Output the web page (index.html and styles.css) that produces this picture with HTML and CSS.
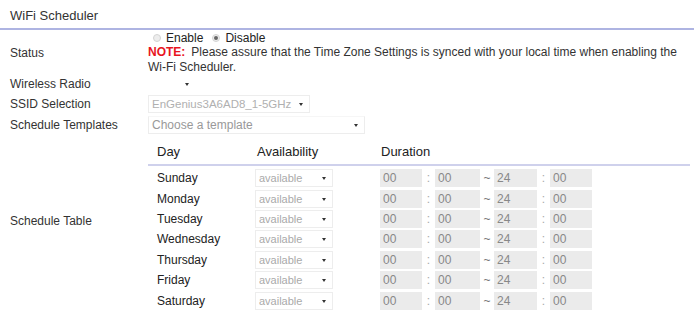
FILE: index.html
```html
<!DOCTYPE html>
<html>
<head>
<meta charset="utf-8">
<link rel="stylesheet" href="styles.css">
</head>
<body>
<div class="page">
  <div class="title">WiFi Scheduler</div>
  <div class="form">
    <div class="row row-status">
      <div class="label">Status</div>
      <div class="value">
        <div class="radios">
          <span class="radio"></span><span class="rlabel">Enable</span>
          <span class="radio checked"></span><span class="rlabel">Disable</span>
        </div>
        <div class="note-line"><b class="note-tag">NOTE:</b><span class="note-text">Please assure that the Time Zone Settings is synced with your local time when enabling the</span></div>
        <div class="note-line">Wi-Fi Scheduler.</div>
      </div>
    </div>
    <div class="row row-radio">
      <div class="label">Wireless Radio</div>
      <div class="value"><div class="select sel-empty"><span class="arrow"></span></div></div>
    </div>
    <div class="row row-ssid">
      <div class="label">SSID Selection</div>
      <div class="value"><div class="select sel-ssid"><span class="stext">EnGenius3A6AD8_1-5GHz</span><span class="arrow"></span></div></div>
    </div>
    <div class="row row-tpl">
      <div class="label">Schedule Templates</div>
      <div class="value"><div class="select sel-tpl"><span class="stext">Choose a template</span><span class="arrow"></span></div></div>
    </div>
    <div class="row row-table">
      <div class="label">Schedule Table</div>
      <div class="value">
        <div class="sched">
          <div class="thead">
            <div class="h-day">Day</div>
            <div class="h-avail">Availability</div>
            <div class="h-dur">Duration</div>
          </div>
          <div class="tbody">
            <div class="trow"><div class="day">Sunday</div><div class="avail"><div class="select sel-av"><span class="stext">available</span><span class="arrow"></span></div></div><div class="dur"><span class="box">00</span><span class="sep">:</span><span class="box">00</span><span class="tilde">~</span><span class="box">24</span><span class="sep">:</span><span class="box">00</span></div></div>
            <div class="trow"><div class="day">Monday</div><div class="avail"><div class="select sel-av"><span class="stext">available</span><span class="arrow"></span></div></div><div class="dur"><span class="box">00</span><span class="sep">:</span><span class="box">00</span><span class="tilde">~</span><span class="box">24</span><span class="sep">:</span><span class="box">00</span></div></div>
            <div class="trow"><div class="day">Tuesday</div><div class="avail"><div class="select sel-av"><span class="stext">available</span><span class="arrow"></span></div></div><div class="dur"><span class="box">00</span><span class="sep">:</span><span class="box">00</span><span class="tilde">~</span><span class="box">24</span><span class="sep">:</span><span class="box">00</span></div></div>
            <div class="trow"><div class="day">Wednesday</div><div class="avail"><div class="select sel-av"><span class="stext">available</span><span class="arrow"></span></div></div><div class="dur"><span class="box">00</span><span class="sep">:</span><span class="box">00</span><span class="tilde">~</span><span class="box">24</span><span class="sep">:</span><span class="box">00</span></div></div>
            <div class="trow"><div class="day">Thursday</div><div class="avail"><div class="select sel-av"><span class="stext">available</span><span class="arrow"></span></div></div><div class="dur"><span class="box">00</span><span class="sep">:</span><span class="box">00</span><span class="tilde">~</span><span class="box">24</span><span class="sep">:</span><span class="box">00</span></div></div>
            <div class="trow"><div class="day">Friday</div><div class="avail"><div class="select sel-av"><span class="stext">available</span><span class="arrow"></span></div></div><div class="dur"><span class="box">00</span><span class="sep">:</span><span class="box">00</span><span class="tilde">~</span><span class="box">24</span><span class="sep">:</span><span class="box">00</span></div></div>
            <div class="trow"><div class="day">Saturday</div><div class="avail"><div class="select sel-av"><span class="stext">available</span><span class="arrow"></span></div></div><div class="dur"><span class="box">00</span><span class="sep">:</span><span class="box">00</span><span class="tilde">~</span><span class="box">24</span><span class="sep">:</span><span class="box">00</span></div></div>
          </div>
        </div>
      </div>
    </div>
  </div>
</div>
</body>
</html>
```
FILE: styles.css
```css
* { box-sizing: border-box; }
html, body { margin: 0; padding: 0; background: #fff; }
body {
  font-family: "Liberation Sans", Arial, sans-serif;
  font-size: 12px;
  color: #333;
  width: 694px;
  height: 322px;
  overflow: hidden;
}
.title {
  font-size: 13px;
  height: 30px;
  padding: 8px 0 0 10px;
  border-bottom: 2px solid #aeb4e2;
  color: #333;
}
.row {
  display: grid;
  grid-template-columns: 148px 1fr;
  align-items: center;
}
.label { padding-left: 10px; }
.row-status { height: 45px; }
.row-radio { height: 18px; }
.row-ssid { height: 21px; }
.row-tpl { height: 22px; }
.row-table { height: 176px; align-items: start; }
.row-table .label { align-self: center; margin-top: -6px; }

.radios {
  display: flex;
  align-items: center;
  height: 15px;
  line-height: 14px;
  padding-left: 5px;
}
.radio {
  width: 8px; height: 8px;
  border-radius: 50%;
  border: 1px solid #d4d4d4;
  background: #ededed;
  margin-right: 5px;
  position: relative;
}
.radio.checked::after {
  content: "";
  position: absolute;
  left: 1px; top: 1px;
  width: 4px; height: 4px;
  border-radius: 50%;
  background: #666;
}
.rlabel { margin-right: 9px; color: #222; }
.note-line { line-height: 15px; height: 15px; color: #333; white-space: nowrap; display: flex; }
.note-tag { color: #e8141e; margin-right: 6px; }

.select {
  display: flex;
  align-items: center;
  height: 18px;
  border: 1px solid #ededed;
  color: #aaa;
  padding-left: 3px;
  position: relative;
}
.arrow {
  position: absolute;
  right: 6px; top: 7px;
  width: 0; height: 0;
  border-left: 2px solid transparent;
  border-right: 2px solid transparent;
  border-top: 3px solid #333;
}
.sel-empty { width: 48px; border-color: transparent; }
.sel-ssid { width: 162px; color: #b0b0b0; font-size: 11.5px; }
.sel-tpl { width: 217px; color: #999; border-top-color: #f6f6f6; }

.sched { width: 542px; }
.thead {
  display: grid;
  grid-template-columns: 107px 125px 1fr;
  font-size: 13px;
  height: 30px;
  align-items: center;
  border-bottom: 2px solid #cfd1ec;
  color: #222;
  padding-top: 2px;
}
.h-day { padding-left: 9px; }
.h-avail { padding-left: 2px; }
.h-dur { padding-left: 1px; }
.tbody { padding-top: 2px; }
.trow {
  display: grid;
  grid-template-columns: 107px 125px 1fr;
  height: 20.4px;
  align-items: center;
}
.day { padding-left: 9px; color: #222; }
.sel-av { width: 78px; color: #aaa; font-size: 11px; }
.dur { display: flex; align-items: center; color: #999; }
.box {
  display: block;
  width: 42px;
  height: 18px;
  line-height: 18px;
  background: #ebebeb;
  padding-left: 3px;
  color: #888;
}
.sep { width: 13px; text-align: center; color: #aaa; }
.tilde { width: 14px; text-align: center; color: #777; }
.dur .box:nth-child(3) { width: 45px; }
.dur .box:nth-child(5) { width: 43px; }
```
